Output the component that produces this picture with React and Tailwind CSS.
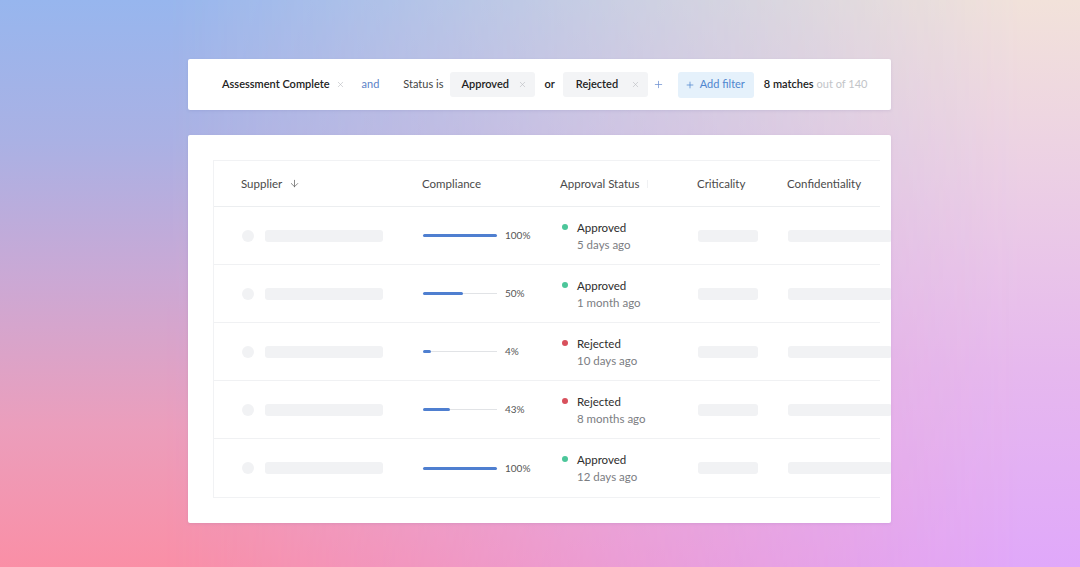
import { ArrowDown, X, Plus } from 'lucide-react';

const ROWS = [
  { pct: 100, fill: 74, status: 'Approved', when: '5 days ago' },
  { pct: 50, fill: 40, status: 'Approved', when: '1 month ago' },
  { pct: 4, fill: 8, status: 'Rejected', when: '10 days ago' },
  { pct: 43, fill: 27, status: 'Rejected', when: '8 months ago' },
  { pct: 100, fill: 74, status: 'Approved', when: '12 days ago' },
];

const COLS = "grid grid-cols-[209px_138px_137px_90px_1fr]";

function Skeleton({ className = "" }) {
  return <div className={`h-[12px] rounded-[3px] bg-[#f1f2f4] blur-[0.6px] ${className}`} />;
}

function Chip({ label, width, pl }) {
  return (
    <div className={`flex items-center justify-between h-[25px] rounded-[3px] bg-[#f3f4f6] pr-[8px] ${width} ${pl}`}>
      <span className="font-semibold text-[#222]">{label}</span>
      <X size={9} strokeWidth={1.5} className="text-[#b5b8bd]" />
    </div>
  );
}

function FilterBar() {
  return (
    <div className="flex items-center h-[51px] bg-white rounded-[2px] pl-[34px] text-[11px] shadow-[0_1px_3px_rgba(80,80,140,0.12)]">
      <span className="font-semibold text-[#222]">Assessment Complete</span>
      <X size={9} strokeWidth={1.5} className="ml-[6px] text-[#b5b8bd]" />
      <span className="ml-[17px] text-[#5b82c8]">and</span>
      <span className="ml-[24px] text-[#444]">Status is</span>
      <div className="ml-[7px]">
        <Chip label="Approved" width="w-[85px]" pl="pl-[11px]" />
      </div>
      <span className="ml-[9px] font-semibold text-[#222]">or</span>
      <div className="ml-[8px]">
        <Chip label="Rejected" width="w-[85px]" pl="pl-[13px]" />
      </div>
      <Plus size={11} strokeWidth={1.6} className="ml-[5px] text-[#6b8fd0]" />
      <div className="ml-[14px] flex items-center h-[26px] w-[76px] rounded-[3px] bg-[#e5f1fb] pl-[7px] text-[#4f86cf]">
        <Plus size={10} strokeWidth={1.8} />
        <span className="ml-[5px]">Add filter</span>
      </div>
      <span className="ml-[10px] font-semibold text-[#222]">8 matches</span>
      <span className="ml-[3px] text-[#c2c4c8]">out of 140</span>
    </div>
  );
}

function Progress({ pct, fill }) {
  return (
    <div className="flex items-center">
      <div className="flex items-center w-[74px]">
        <div className="h-[3px] rounded-full bg-[#4f7fd0]" style={{ width: fill }} />
        <div className="flex-1 h-px bg-[#e1e3e6]" />
      </div>
      <span className="ml-[8px] text-[10px] text-[#555]">{pct}%</span>
    </div>
  );
}

function Row({ row, last }) {
  const approved = row.status === 'Approved';
  return (
    <div className={`${COLS} items-center h-[58px] ${last ? '' : 'border-b border-[#f0f1f3]'}`}>
      <div className="flex items-center pl-[28px]">
        <div className="w-[12px] h-[12px] rounded-full bg-[#f1f2f4] blur-[0.6px]" />
        <Skeleton className="ml-[11px] w-[118px]" />
      </div>
      <Progress pct={row.pct} fill={row.fill} />
      <div className="flex">
        <div className={`mt-[5px] ml-[1px] w-[6px] h-[6px] rounded-full ${approved ? 'bg-[#4cc69a]' : 'bg-[#d8505c]'}`} />
        <div className="ml-[9px] flex flex-col leading-[17px] text-[11.5px]">
          <span className="text-[#2d2d2d]">{row.status}</span>
          <span className="text-[#7b7d82]">{row.when}</span>
        </div>
      </div>
      <Skeleton className="w-[60px]" />
      <Skeleton className="w-[104px]" />
    </div>
  );
}

function Table() {
  return (
    <div className="bg-white rounded-[2px] overflow-hidden pt-[25px] pb-[25px] pl-[25px] pr-[11px] shadow-[0_1px_3px_rgba(80,80,140,0.12)]">
      <div className="border border-[#f1f2f4] border-r-0">
        <div className={`${COLS} items-center h-[46px] border-b border-[#eceef0] text-[11.5px] text-[#4a4a4a]`}>
          <div className="flex items-center pl-[27px]">
            <span>Supplier</span>
            <ArrowDown size={11} strokeWidth={1.5} className="ml-[7px] text-[#555]" />
          </div>
          <span className="-ml-px">Compliance</span>
          <div className="flex items-center -ml-px">
            <span>Approval Status</span>
            <span className="ml-[8px] w-px h-[8px] bg-[#f0f1f3]" />
          </div>
          <span className="-ml-px">Criticality</span>
          <span className="-ml-px">Confidentiality</span>
        </div>
        {ROWS.map((r, i) => (
          <Row key={i} row={r} last={i === ROWS.length - 1} />
        ))}
      </div>
    </div>
  );
}

export default function App() {
  return (
    <div className="relative w-full h-[567px] overflow-hidden font-['Lato','Open_Sans',sans-serif] bg-[linear-gradient(to_bottom,#97b6ee_0%,#aab1e4_25%,#cca8d4_50%,#eb9ebc_75%,#fa8fa6_100%)]">
      {/* right-hand wash: peach top, violet bottom, faded in from the left */}
      <div className="absolute inset-0 bg-[linear-gradient(to_bottom,#f2e2da_0%,#ecd0e4_30%,#e6b8ee_65%,#e0a8fa_100%)] [mask-image:linear-gradient(to_right,transparent_15%,rgba(0,0,0,0.6)_60%,black_95%)]" />
      <div className="relative flex flex-col gap-[25px] w-[703px] ml-[188px] pt-[59px]">
        <FilterBar />
        <Table />
      </div>
    </div>
  );
}
